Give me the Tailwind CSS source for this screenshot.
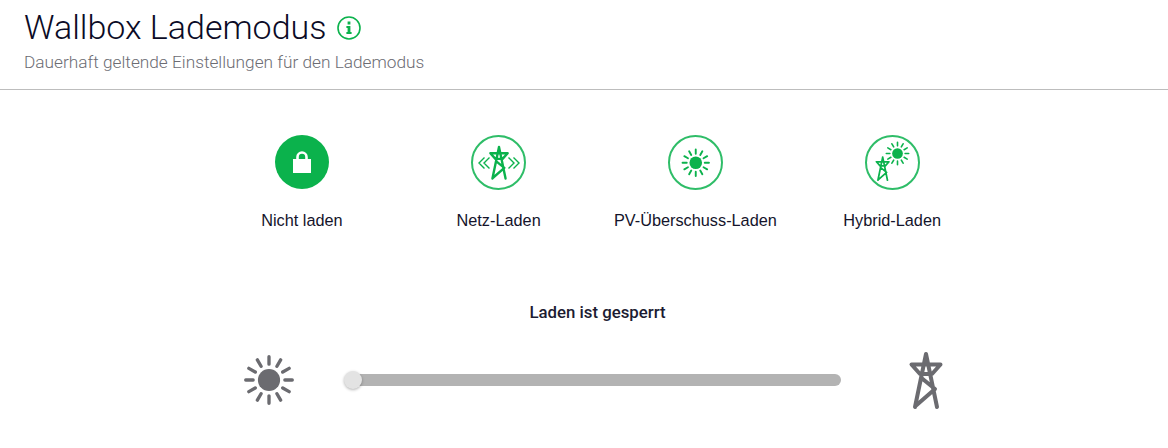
<!DOCTYPE html>
<html lang="de">
  <head>
    <meta charset="UTF-8" />
    <title>Wallbox Lademodus</title>
    <script src="https://cdn.jsdelivr.net/npm/@tailwindcss/browser@4"></script>
  </head>
  <body class="bg-white h-[448px] overflow-hidden font-['Liberation_Sans',sans-serif]">
    <svg class="hidden">
      <symbol id="sun" viewBox="-14.75 -14.75 29.5 29.5">
        <circle r="6.3" fill="currentColor" />
        <g stroke="currentColor" stroke-width="1.9" stroke-linecap="round">
          <path d="M9 0H13.2M7.79 4.5L11.43 6.6M4.5 7.79L6.6 11.43M0 9V13.2M-4.5 7.79L-6.6 11.43M-7.79 4.5L-11.43 6.6M-9 0H-13.2M-7.79 -4.5L-11.43 -6.6M-4.5 -7.79L-6.6 -11.43M0 -9V-13.2M4.5 -7.79L6.6 -11.43M7.79 -4.5L11.43 -6.6" />
        </g>
      </symbol>
      <symbol id="tower" viewBox="0 0 40 62">
        <path fill="none" stroke="currentColor" stroke-width="4" stroke-linecap="round" stroke-linejoin="round" d="M20 5L9 58M20 5L31 58M5.5 15.5H34.500L26 25H14ZM15.500 29L29 40L9.500 57" />
      </symbol>
    </svg>

    <!-- Header -->
    <header class="h-[90px] border-b border-[#bdbdbd] pl-[24px] pt-[8px]">
      <div class="flex items-center gap-[11px] h-[39px]">
        <h1 class="text-[34px] leading-[39px] font-light text-[#0b0b26] font-['Roboto',sans-serif]">Wallbox Lademodus</h1>
        <svg class="w-[24px] h-[24px] text-[#0bb24c]" viewBox="0 0 24 24">
          <circle cx="12" cy="12" r="11" fill="none" stroke="currentColor" stroke-width="1.6" />
          <path fill="currentColor" d="M10.6 5.6h2.8v2.8h-2.8zM9.4 10h4v6h1.2v2H9.4v-2h1.2v-4H9.4z" />
        </svg>
      </div>
      <p class="mt-[5px] text-[17.25px] leading-[20px] text-[#6c6c73] font-['Roboto',sans-serif] font-light">Dauerhaft geltende Einstellungen für den Lademodus</p>
    </header>

    <!-- Mode selection -->
    <div class="ml-[203.5px] mt-[45px] w-[787px] grid grid-cols-4 text-[16.3px] leading-[20px] text-[#14142b]">
      <div class="flex flex-col items-center gap-[21px]">
        <div class="w-[54px] h-[54px] rounded-full bg-[#0bb24c] flex items-center justify-center">
          <svg class="w-[20px] h-[24px]" viewBox="0 0 20 24">
            <path fill="none" stroke="#fff" stroke-width="2.6" d="M5.5 10V7a4.5 4.5 0 0 1 9 0V10" />
            <rect x="1" y="9" width="18" height="14" fill="#fff" />
          </svg>
        </div>
        <span>Nicht laden</span>
      </div>
      <div class="flex flex-col items-center gap-[20px]">
        <div class="w-[55px] h-[55px] rounded-full border-2 border-[#2fbd68] flex items-center justify-center text-[#0bb24c]">
          <svg class="w-[44px] h-[36px] overflow-visible" viewBox="0 0 44 36" fill="none" stroke="currentColor">
            <path stroke-width="1.4" d="M7.5 12.5L2 18L7.5 23.500M12.500 12.500L7 18L12.500 23.500M36.500 12.500L42 18L36.500 23.500M31.500 12.500L37 18L31.500 23.500" />
            <use href="#tower" x="10" y="-1" width="24" height="37" />
          </svg>
        </div>
        <span>Netz-Laden</span>
      </div>
      <div class="flex flex-col items-center gap-[20px]">
        <div class="w-[55px] h-[55px] rounded-full border-2 border-[#2fbd68] flex items-center justify-center text-[#0bb24c]">
          <svg class="w-[29.5px] h-[29.5px]"><use href="#sun" /></svg>
        </div>
        <span>PV-Überschuss-Laden</span>
      </div>
      <div class="flex flex-col items-center gap-[20px]">
        <div class="relative w-[55px] h-[55px] rounded-full border-2 border-[#2fbd68] text-[#0bb24c]">
          <svg class="absolute left-[18.300px] top-[3.800px] w-[25px] h-[25px]"><use href="#sun" /></svg>
          <svg class="absolute left-[7.800px] top-[18px] w-[17.400px] h-[27px]"><use href="#tower" /></svg>
        </div>
        <span>Hybrid-Laden</span>
      </div>
    </div>

    <!-- Slider -->
    <p class="mt-[72px] ml-[204px] w-[787px] text-center text-[16.8px] leading-[20px] font-medium text-[#1c1c32] font-['Roboto',sans-serif]">Laden ist gesperrt</p>
    <div class="mt-[27px] ml-[243px] flex items-center text-[#6b6b70]">
      <svg class="w-[52px] h-[52px]"><use href="#sun" /></svg>
      <div class="relative ml-[50px] w-[496px] h-[12px] rounded-full bg-[#b3b3b3]">
        <div class="absolute left-[-1px] top-[-3px] w-[18px] h-[18px] rounded-full bg-[#e3e3e3] shadow-[0_1px_3px_rgba(0,0,0,0.3)]"></div>
      </div>
      <svg class="ml-[65px] w-[40px] h-[62px]"><use href="#tower" /></svg>
    </div>
  </body>
</html>
